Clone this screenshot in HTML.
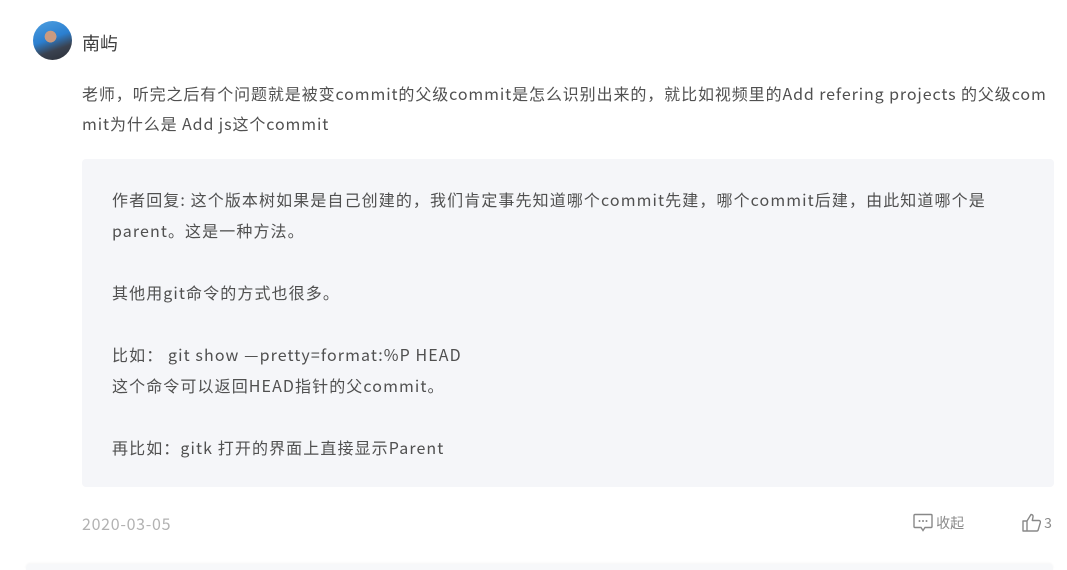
<!DOCTYPE html>
<html><head><meta charset="utf-8"><style>
body{margin:0;width:1067px;height:569px;background:#fff;font-family:"Noto Sans CJK SC","Liberation Sans",sans-serif;color:#505050;position:relative;overflow:hidden}
.av{position:absolute;left:33px;top:21px;width:39px;height:39px;border-radius:50%;background:radial-gradient(circle at 45% 40%,#c99a80 0 18%,transparent 19%),linear-gradient(160deg,#4fa0e0 0%,#2b7fd0 45%,#3a4250 70%,#2a2e36 100%)}
.name{position:absolute;left:82px;top:30px;font-size:18px;line-height:26px;color:#3c3c3c}
.q{position:absolute;left:82px;top:78px;width:990px;font-size:16px;line-height:30px;color:#505050;white-space:nowrap;letter-spacing:0.9px}
.box{position:absolute;left:82px;top:159px;width:972px;height:328px;background:#f5f6f9;border-radius:4px}
.r{position:absolute;left:112px;top:184px;width:940px;font-size:16px;line-height:31px;color:#505050;white-space:nowrap;letter-spacing:1.1px}
.date{position:absolute;left:82px;top:512px;font-size:16px;line-height:22px;color:#b2b2b2;letter-spacing:0.7px}
.col{position:absolute;left:913px;top:512px;font-size:14px;line-height:22px;color:#8a8a8a}
.like{position:absolute;left:1022px;top:512px;font-size:14px;line-height:22px;color:#8a8a8a}
.line{position:absolute;left:26px;right:14px;top:564px;height:6px;background:#f7f8fa;border-radius:4px 4px 0 0;box-shadow:0 -1px 2px rgba(0,0,0,.04)}
</style></head><body>
<div class="av"></div>
<div class="name">南屿</div>
<div class="q">老师，听完之后有个问题就是被变commit的父级commit是怎么识别出来的，就比如视频里的Add refering projects 的父级com<br>mit为什么是 Add js这个commit</div>
<div class="box"></div>
<div class="r">作者回复: 这个版本树如果是自己创建的，我们肯定事先知道哪个commit先建，哪个commit后建，由此知道哪个是<br>parent。这是一种方法。<br><br>其他用git命令的方式也很多。<br><br>比如：&nbsp;git show —pretty=format:%P HEAD<br>这个命令可以返回HEAD指针的父commit。<br><br>再比如：gitk 打开的界面上直接显示Parent</div>
<div class="date">2020-03-05</div>
<div class="col"><svg width="20" height="19" viewBox="0 0 20 19" style="vertical-align:-4px"><path d="M2 1.5h16a1 1 0 0 1 1 1v11a1 1 0 0 1-1 1h-6l-2 3-2-3H2a1 1 0 0 1-1-1v-11a1 1 0 0 1 1-1z" fill="none" stroke="#888" stroke-width="1.4"/><circle cx="6.5" cy="8" r="1" fill="#888"/><circle cx="10" cy="8" r="1" fill="#888"/><circle cx="13.5" cy="8" r="1" fill="#888"/></svg> 收起</div>
<div class="like"><svg width="19" height="19" viewBox="0 0 19 19" style="vertical-align:-4px"><path d="M1 8h4v10H1zM5 8l4-6.5c1.5 0 2.3 1 2 2.5l-.7 3.5H17a1.5 1.5 0 0 1 1.4 1.9l-2.2 7.4a1.5 1.5 0 0 1-1.4 1.2H5" fill="none" stroke="#888" stroke-width="1.4" stroke-linejoin="round"/></svg> 3</div>
<div class="line"></div>
</body></html>
